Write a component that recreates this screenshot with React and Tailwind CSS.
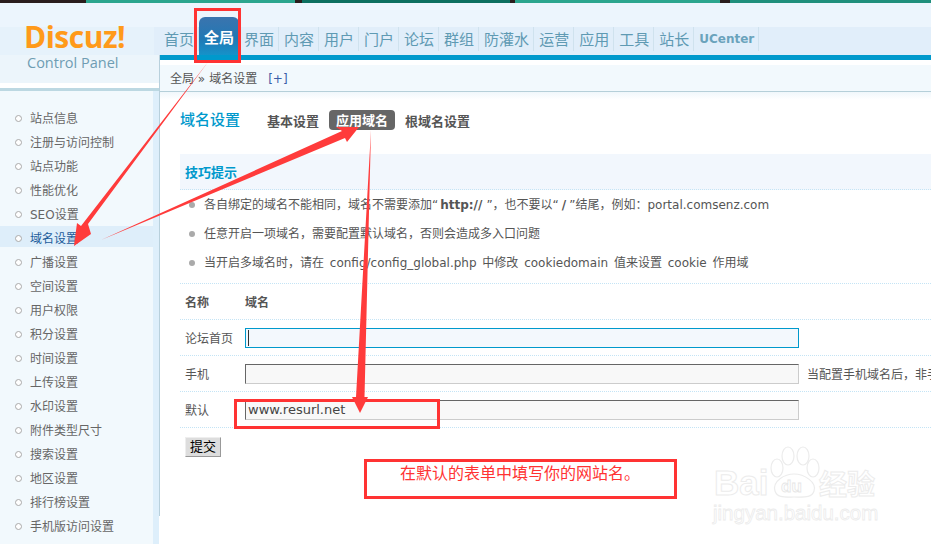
const nav = ["首页","全局","界面","内容","用户","门户","论坛","群组","防灌水","运营","应用","工具","站长","UCenter"];
const side = ["站点信息","注册与访问控制","站点功能","性能优化","SEO设置","域名设置","广播设置","空间设置","用户权限","积分设置","时间设置","上传设置","水印设置","附件类型尺寸","搜索设置","地区设置","排行榜设置","手机版访问设置"];
const font = { fontFamily: '"DejaVu Sans","Noto Sans CJK SC",sans-serif' };
const cjk = { fontFamily: '"Noto Sans CJK SC",sans-serif' };
function Row({label, children}) {
  return <div className="h-[36px] flex items-center border-b border-dotted border-[#c4e4f5]"><div className="w-[65px] pl-[5px] pt-[2px] shrink-0">{label}</div>{children}</div>;
}
export default function App() {
  return (
    <div style={font} className="relative w-[931px] h-[544px] overflow-hidden bg-white text-[12px] text-[#555]">
      <div className="h-[3px] flex bg-[#2a1d1d] pl-[86px]">
        <div className="w-[209px] bg-[#2ba58e]"/>
        <div className="w-[7px]"/>
        <div className="w-[208px] bg-[#0c6f60]"/>
        <div className="w-[5px]"/>
        <div className="w-[205px] bg-[#2ba58e]"/>
        <div className="w-[10px]"/>
        <div className="flex-1 bg-[#1f8f7c]"/>
      </div>
      <div className="h-[24px] bg-[#ecf5fd]"/>
      <div className="flex">
        <div className="w-[154px] shrink-0 h-[28px] bg-[#e6f2fb]"/>
        <div className="flex-1 h-[28px] bg-[#e1eefa] flex items-center pl-[5px] pb-[4px] text-[15px] text-[#5f9ab3]">
          {nav.map((n,i)=> i===1
            ? <div key={n} className="w-[40px] h-[43px] self-start -mt-[10px] rounded-t-[6px] bg-gradient-to-b from-[#3a74ae] via-[#1f78b4] to-[#0f9ad0] text-white font-bold flex items-center justify-center">{n}</div>
            : <div key={n} className={`h-[24px] pl-[5px] pr-[4px] flex items-center border-r border-[#cfe2ee] ${n==="UCenter"?"font-bold text-[12px] text-[#6aa3bc]":""}`} style={n==="UCenter"?font:cjk}>{n}</div>)}
        </div>
      </div>
      <div className="flex">
        <div className="w-[159px] shrink-0 h-[461px]">
          <div className="h-[33px] bg-[#ecf5fb] border-b-[5px] border-white"/>
          <div className="h-[3px] bg-[#bcd8e2]"/>
          <div className="flex h-full">
            <div className="w-[153px] bg-[#f2f9fd] pt-[15px] text-[#666]">
              {side.map(s=>(
                <div key={s} className={`h-[24px] flex items-center pl-[15px] gap-[8px] ${s==="域名设置"?"bg-[linear-gradient(#deeefa_21px,transparent_21px)] text-[#1c5c9a]":""}`}>
                  <span className="w-[7px] h-[7px] rounded-full border border-[#aaa] bg-white"/><span className="pt-[2px]">{s}</span>
                </div>))}
            </div>
            <div className="w-[6px] bg-[#deeffb]"/>
          </div>
        </div>
        <div className="flex-1 border-l border-[#b8d0dc]">
          <div className="h-[5px] bg-[#0099cc]"/>
          <div className="h-[5px] bg-white"/>
          <div className="h-[27px] bg-[#f2f9fd] border-b border-[#b5cfd9] pl-[10px] pt-[2px] flex items-center text-[#555] whitespace-nowrap">全局 » <span className="ml-[4px]">域名设置</span><span className="ml-[11px] text-[#3a5ea8]">[+]</span></div>
          <div className="bg-gradient-to-b from-[#f0f7fb] to-white h-[8px]"/>
          <div className="pl-[20px]">
            <div className="h-[40px] flex items-center">
              <span className="text-[15px] text-[#0099cc] font-medium w-[87px]">域名设置</span>
              <span className="font-bold text-[13px] w-[62px] pt-[3px]">基本设置</span>
              <span className="font-bold text-[13px] bg-[#666] text-white rounded-[4px] w-[66px] justify-center h-[20px] pt-[2px] flex items-center">应用域名</span>
              <span className="font-bold text-[13px] ml-[10px] pt-[3px]">根域名设置</span>
            </div>
            <div className="h-[36px] mt-[14px] pt-[2px] bg-[#f2f7fd] border-b border-dotted border-[#c4e4f5] flex items-center pl-[5px] text-[13px] text-[#0099cc] font-bold">技巧提示</div>
            <ul className="h-[94px] border-b border-dotted border-[#c4e4f5]">
              {[<>各自绑定的域名不能相同，域名不需要添加“<b className="ml-[2px] mr-[4px]">http://</b>”，也不要以“<b className="mx-[3px]">/</b>”结尾，例如：portal.comsenz.com</>,
                "任意开启一项域名，需要配置默认域名，否则会造成多入口问题",
                "当开启多域名时，请在 config/config_global.php 中修改 cookiedomain 值来设置 cookie 作用域"].map((t,i)=>(
                <li key={i} className="h-[29px] flex items-center pl-[9px] gap-[9px] whitespace-nowrap [word-spacing:2px]"><span className="w-[6px] h-[6px] rounded-full bg-[#aaa] shrink-0"/><span>{t}</span></li>))}
            </ul>
            <Row label={<b>名称</b>}><b className="pt-[2px]">域名</b></Row>
            <Row label="论坛首页">
              <div className="relative w-[554px] h-[20px]">
                <input readOnly className="w-full h-full border border-[#0099cc] bg-[#f3f8fd] outline-none block"/>
                <span className="absolute left-[3px] top-[2px] w-px h-[16px] bg-[#333]"/>
              </div>
            </Row>
            <Row label="手机"><input readOnly className="w-[554px] h-[20px] border border-[#666] border-r-[#ccc] border-b-[#ccc] bg-[#f8f8f8] outline-none"/><span className="ml-[8px] pt-[2px] whitespace-nowrap">当配置手机域名后，非手</span></Row>
            <Row label="默认"><input readOnly value="www.resurl.net" className="w-[554px] h-[20px] pl-[2px] text-[13px] text-[#444] border border-[#666] border-r-[#ccc] border-b-[#ccc] bg-[#f8f8f8] outline-none" style={font}/></Row>
            <div className="pl-[5px] pt-[9px]"><button className="w-[36px] h-[20px] bg-[#ddd] border border-[#999] border-t-[#eee] border-l-[#eee] text-black text-[13px] flex items-center justify-center">提交</button></div>
          </div>
        </div>
      </div>
      {/* logo */}
      <div className="absolute left-[24px] top-[20px] w-[110px]">
        <div className="text-[30px] leading-[33px] font-bold text-[#ff9a1a] tracking-[-0.5px] whitespace-nowrap" style={{fontFamily:'"Open Sans",sans-serif'}}>Discuz!</div>
        <div className="text-[14.5px] leading-[20px] text-[#6f9db3] pl-[3px] whitespace-nowrap" style={{fontFamily:'"Open Sans",sans-serif'}}>Control Panel</div>
      </div>
      {/* annotations */}
      <div className="absolute left-[194px] top-[8px] w-[47px] h-[55px] border-[3px] border-[#ff3333]"/>
      <div className="absolute left-[234px] top-[399px] w-[206px] h-[30px] border-[3px] border-[#ff3333]"/>
      <div className="absolute left-[364px] top-[459px] w-[313px] h-[40px] border-[3px] border-[#ff3333] text-[#ff3333] text-[16px] pl-[33px] leading-[24px] whitespace-nowrap">在默认的表单中填写你的网站名。</div>
      <svg className="absolute left-0 top-0 pointer-events-none" width="931" height="544">
        <polygon fill="#ff3b3b" points="208,62 88,224 91,234 74,246 77,223 81,226"/>
        <polygon fill="#ff3b3b" points="101,240 342,131 336,127 359,127 347,142 345,138"/>
        <polygon fill="#ff3b3b" points="371,130 364.5,397 368,397 360,413 352,397 356,397"/>
      </svg>
      {/* watermark */}
      <svg className="absolute left-[765px] top-[443px]" width="60" height="58" fill="#fff" stroke="#ececec" strokeWidth="1.2">
        <ellipse cx="12" cy="25" rx="6" ry="9"/><ellipse cx="23" cy="13" rx="6" ry="9"/><ellipse cx="38" cy="13" rx="6" ry="9"/><ellipse cx="48" cy="25" rx="6" ry="9"/>
        <path d="M10 48c-3-10 10-17 19-17 10 0 23 8 20 17-2 7-10 6-20 6-9 0-17 1-19-6z"/>
      </svg>
      <div className="absolute left-[714px] top-[463px] text-[35px] leading-[40px] font-bold text-white [-webkit-text-stroke:1px_#ececec]" style={{fontFamily:'"Liberation Sans",sans-serif'}}>Bai</div>
      <div className="absolute left-[781px] top-[477px] text-[17px] leading-[20px] font-bold text-white [-webkit-text-stroke:0.8px_#e6e6e6]" style={{fontFamily:'"Liberation Sans",sans-serif'}}>du</div>
      <div className="absolute left-[819px] top-[468px] text-[28px] leading-[30px] font-bold text-white [-webkit-text-stroke:1px_#ececec]" style={cjk}>经验</div>
      <div className="absolute left-[713px] top-[501px] text-[20.5px] leading-[24px] text-white [-webkit-text-stroke:0.8px_#ececec] whitespace-nowrap" style={{fontFamily:'"Liberation Sans",sans-serif'}}>jingyan.baidu.com</div>
    </div>
  );
}
